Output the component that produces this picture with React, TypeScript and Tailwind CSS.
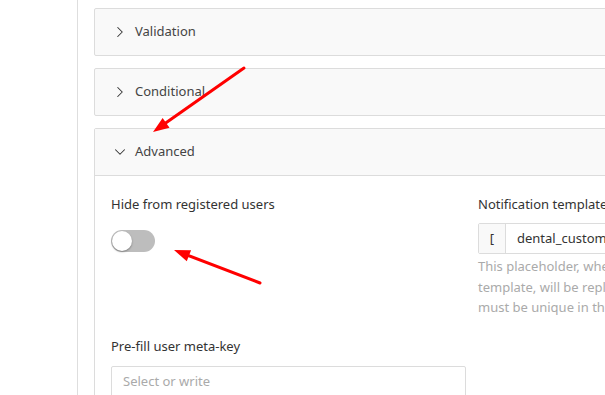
import { ChevronRight, ChevronDown } from 'lucide-react'

const font = { fontFamily: '"Noto Sans", "Open Sans", sans-serif' }

function arrowHead(x1: number, y1: number, x2: number, y2: number, len = 16, half = 6) {
  const dx = x2 - x1
  const dy = y2 - y1
  const d = Math.hypot(dx, dy)
  const ux = dx / d
  const uy = dy / d
  const bx = x2 - ux * len
  const by = y2 - uy * len
  return `${x2},${y2} ${bx - uy * half},${by + ux * half} ${bx + uy * half},${by - ux * half}`
}

function Arrow({ from, to }: { from: [number, number]; to: [number, number] }) {
  const [x1, y1] = from
  const [x2, y2] = to
  const d = Math.hypot(x2 - x1, y2 - y1)
  const ex = x2 - ((x2 - x1) / d) * 12
  const ey = y2 - ((y2 - y1) / d) * 12
  return (
    <g>
      <line x1={x1} y1={y1} x2={ex} y2={ey} stroke="#ff0000" strokeWidth={3} strokeLinecap="round" />
      <polygon points={arrowHead(x1, y1, x2, y2)} fill="#ff0000" />
    </g>
  )
}

function CollapsedPanel({ title }: { title: string }) {
  return (
    <div className="shrink-0 h-[48px] border border-[#dcdcdc] bg-[#f9f9f9] rounded-[2px] flex items-center pl-[16px]">
      <ChevronRight size={18} strokeWidth={1.4} className="text-[#333]" />
      <span className="ml-[6px] text-[13px] text-[#444]">{title}</span>
    </div>
  )
}

export default function App() {
  return (
    <div className="relative w-[605px] h-[395px] overflow-hidden bg-white flex" style={font}>
      <div className="w-[78px] shrink-0 border-r border-[#dedede]" />

      <div className="flex-1 pl-[16px] pt-[8px] flex flex-col gap-[12px] min-w-[800px]">
        <CollapsedPanel title="Validation" />
        <CollapsedPanel title="Conditional" />

        <div className="shrink-0 border border-[#dcdcdc] rounded-[2px]">
          <div className="h-[47px] bg-[#f9f9f9] border-b border-[#dcdcdc] flex items-center pl-[16px]">
            <ChevronDown size={18} strokeWidth={1.4} className="text-[#333]" />
            <span className="ml-[6px] text-[13px] text-[#444]">Advanced</span>
          </div>

          <div className="bg-white pl-[16px] pt-[18px] grid grid-cols-[355px_355px] gap-x-[12px] text-[13px]">
            <div className="flex flex-col">
              <div className="h-5 leading-5 text-[#333]">Hide from registered users</div>
              <div className="mt-[16px] w-[44px] h-[22px] rounded-full bg-[#bdbdbd] p-[1px] flex items-center">
                <div className="w-[20px] h-[20px] rounded-full bg-white shadow-[0_1px_2px_rgba(0,0,0,0.35)]" />
              </div>
              <div className="mt-[84px] h-5 leading-5 text-[#333]">Pre-fill user meta-key</div>
              <div className="mt-[10px] h-[31px] border border-[#dcdcdc] rounded-[2px] flex items-center px-[11px] text-[#aaa]">
                Select or write
              </div>
            </div>

            <div className="flex flex-col">
              <div className="h-5 leading-5 text-[#333]">Notification template</div>
              <div className="mt-[9px] h-[31px] border border-[#dcdcdc] rounded-[2px] flex">
                <div className="w-[27px] bg-[#f9f9f9] border-r border-[#dcdcdc] flex items-center justify-center text-[#333]">[</div>
                <div className="flex items-center pl-[11px] text-[#333]">dental_custom_field</div>
              </div>
              <div className="mt-[2px] leading-[20.5px] text-[#aaa]">
                This placeholder, when inserted into the notification
                <br />
                template, will be replaced with the field value. It
                <br />
                must be unique in the form.
              </div>
            </div>
          </div>
        </div>
      </div>

      <svg className="absolute inset-0 pointer-events-none" width={605} height={395}>
        <Arrow from={[244, 68]} to={[153, 132]} />
        <Arrow from={[260, 283]} to={[174, 250]} />
      </svg>
    </div>
  )
}
